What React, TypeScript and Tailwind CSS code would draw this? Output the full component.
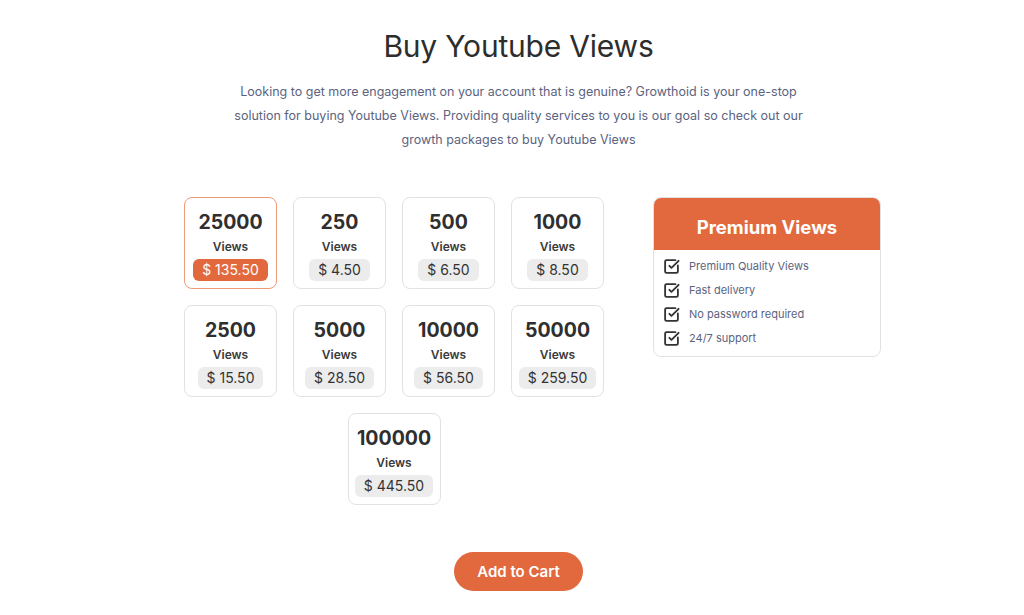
import React from "react";

const packages = [
  { n: "25000", p: "$ 135.50", sel: true },
  { n: "250", p: "$ 4.50" },
  { n: "500", p: "$ 6.50" },
  { n: "1000", p: "$ 8.50" },
  { n: "2500", p: "$ 15.50" },
  { n: "5000", p: "$ 28.50" },
  { n: "10000", p: "$ 56.50" },
  { n: "50000", p: "$ 259.50" },
];

function Card({ n, p, sel }: { n: string; p: string; sel?: boolean }) {
  return (
    <div
      className={`w-[93px] h-[92px] rounded-[8px] border flex flex-col items-center pt-[12px] bg-white ${
        sel ? "border-[#ee9a78]" : "border-[#e2e2e2]"
      }`}
    >
      <div className="text-[19.5px] leading-[24px] font-bold text-[#2f2f2f]">{n}</div>
      <div className="mt-[5px] text-[12px] leading-[16px] font-semibold text-[#3a3a3a]">Views</div>
      <div
        className={`mt-[4px] h-[22px] px-[9px] rounded-[6px] text-[14px] leading-[22px] ${
          sel ? "bg-[#e2693e] text-white" : "bg-[#ececec] text-[#333]"
        }`}
      >
        {p}
      </div>
    </div>
  );
}

function CheckIcon() {
  return (
    <svg width="17" height="17" viewBox="0 0 24 24" fill="none" stroke="#333" strokeWidth="2.6" strokeLinecap="round" strokeLinejoin="round">
      <path d="M21 10.5V19a2 2 0 0 1-2 2H5a2 2 0 0 1-2-2V5a2 2 0 0 1 2-2h12.5" />
      <path d="m9 11 3 3L22 4" />
    </svg>
  );
}

export default function App() {
  const features = ["Premium Quality Views", "Fast delivery", "No password required", "24/7 support"];
  return (
    <div className="w-[1024px] h-[615px] bg-white overflow-hidden" style={{ fontFamily: "Inter, 'Noto Sans', sans-serif" }}>
      <div className="pl-[13px] pt-[26px] flex flex-col items-center">
        <h1 className="text-[30px] leading-[40px] font-normal text-[#2d2d2d] tracking-[-0.2px]">Buy Youtube Views</h1>
        <p className="mt-[14px] w-[572px] text-center text-[12.5px] leading-[24px] text-[#5b6380]">
          Looking to get more engagement on your account that is genuine? Growthoid is your one-stop solution for buying Youtube Views. Providing quality services to you is our goal so check out our growth packages to buy Youtube Views
        </p>
      </div>
      <div className="mt-[45px] pl-[184px] flex items-start gap-[49px]">
        <div className="flex flex-col items-center gap-[16px] w-[420px]">
          <div className="grid grid-cols-4 gap-[16px]">
            {packages.map((x) => (
              <Card key={x.n} {...x} />
            ))}
          </div>
          <Card n="100000" p="$ 445.50" />
        </div>
        <div className="w-[228px] h-[160px] rounded-[8px] border border-[#e2e2e2] overflow-hidden">
          <div className="h-[52px] bg-[#e2693e] flex items-center justify-center pt-[7px] text-white text-[18.5px] font-bold">
            Premium Views
          </div>
          <ul className="pt-[4px] pl-[9px]">
            {features.map((f) => (
              <li key={f} className="flex items-center h-[24px]">
                <CheckIcon />
                <span className="ml-[9px] text-[11px] text-[#5b6380]">{f}</span>
              </li>
            ))}
          </ul>
        </div>
      </div>
      <div className="mt-[47px] pl-[13px] flex justify-center">
        <button className="w-[129px] h-[39px] rounded-full bg-[#e2693e] pt-[2px] text-white text-[15px] font-semibold">
          Add to Cart
        </button>
      </div>
    </div>
  );
}
